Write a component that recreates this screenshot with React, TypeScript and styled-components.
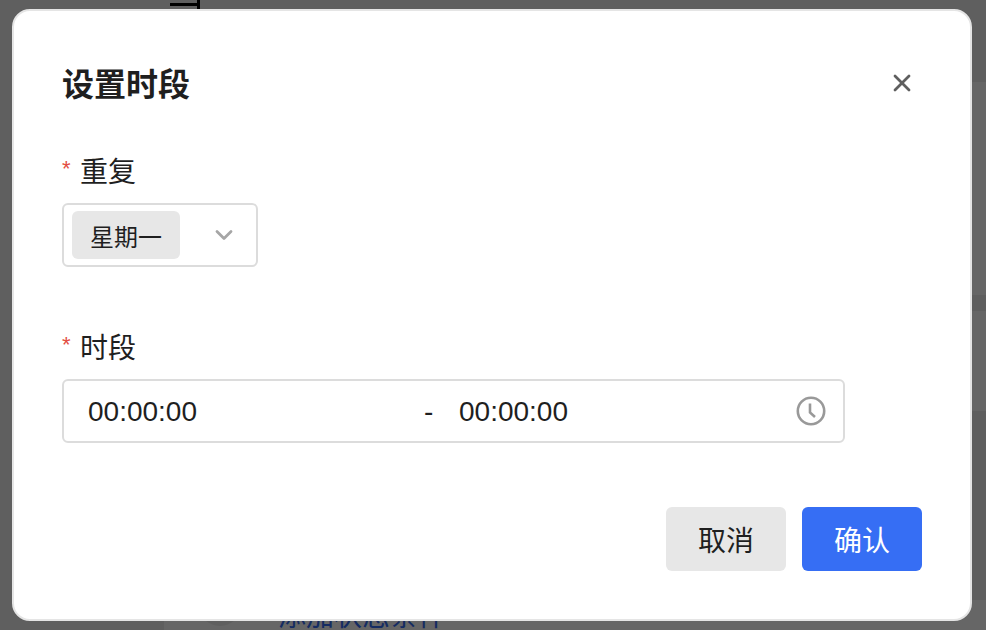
import React from 'react';
import styled, { createGlobalStyle } from 'styled-components';
import { X, ChevronDown, Plus } from 'lucide-react';

const GlobalStyle = createGlobalStyle`
  html, body {
    margin: 0;
    padding: 0;
    height: 100%;
    overflow: hidden;
    background: #eeeeee;
    font-family: "Liberation Sans", "Noto Sans CJK SC", sans-serif;
  }
`;

const Page = styled.div`
  position: relative;
  width: 986px;
  height: 630px;
  overflow: hidden;
  background: #eeeeee;
`;

const PageHeading = styled.div`
  box-sizing: border-box;
  height: 82px;
  padding: 3px 0 0 170px;
`;

const HeadingMark = styled.div`
  position: relative;
  width: 27px;
  height: 3px;
  background: #000000;

  &::after {
    content: '';
    position: absolute;
    top: -3px;
    right: -3px;
    width: 3px;
    height: 16px;
    background: #000000;
  }
`;

const Content = styled.div`
  display: flex;
  flex-direction: column;
  margin-left: 164px;
`;

const Card = styled.div<{ $height: number; $gap?: number }>`
  height: ${props => props.$height}px;
  margin-bottom: ${props => props.$gap || 0}px;
  background: #ffffff;
`;

const AddRow = styled.div`
  display: flex;
  align-items: flex-start;
  height: 40px;
  margin-top: 189px;
  padding-left: 34px;
  background: #ffffff;
  color: #366ef4;
`;

const AddIcon = styled.span`
  display: flex;
  align-items: center;
  justify-content: center;
  flex: none;
  width: 44px;
  height: 26px;
  margin-right: 36px;
  border-radius: 0 0 22px 22px;
  background: #eeeeee;
`;

const AddLabel = styled.span`
  font-size: 28px;
  line-height: 34px;
`;

const Overlay = styled.div`
  position: absolute;
  inset: 0;
  box-sizing: border-box;
  padding: 9px 14px 9px 12px;
  background: rgba(0, 0, 0, 0.6);
`;

const Dialog = styled.div`
  box-sizing: border-box;
  height: 612px;
  padding: 50px 48px 48px 48px;
  display: flex;
  flex-direction: column;
  background: #ffffff;
  border-radius: 18px;
  border: 2px solid #e5e5e5;
`;

const Header = styled.div`
  display: flex;
  align-items: center;
  justify-content: space-between;
  height: 48px;
  margin-bottom: 43px;
`;

const Title = styled.h2`
  margin: 0;
  font-size: 32px;
  line-height: 48px;
  font-weight: 700;
  color: #1f1f1f;
`;

const CloseButton = styled.button`
  display: flex;
  padding: 0;
  margin: -4px 6px 0 0;
  border: none;
  background: none;
  color: #5f5f5f;
`;

const Field = styled.div`
  display: flex;
  flex-direction: column;
  align-items: flex-start;
  margin-bottom: 61px;
`;

const Label = styled.label`
  display: flex;
  align-items: center;
  height: 36px;
  margin-bottom: 15px;
  font-size: 28px;
  color: #1f1f1f;
`;

const Required = styled.span`
  width: 18px;
  margin-top: -2px;
  font-size: 22px;
  color: #e34d43;
`;

const SelectBox = styled.div`
  box-sizing: border-box;
  display: flex;
  align-items: center;
  justify-content: space-between;
  width: 196px;
  height: 64px;
  padding: 0 18px 0 8px;
  border: 2px solid #dcdcdc;
  border-radius: 6px;
  color: #a6a6a6;
`;

const Tag = styled.span`
  display: flex;
  align-items: center;
  justify-content: center;
  width: 108px;
  height: 48px;
  border-radius: 6px;
  background: #e7e7e7;
  font-size: 24px;
  color: #1f1f1f;
`;

const RangeBox = styled.div`
  box-sizing: border-box;
  display: flex;
  align-items: center;
  width: 783px;
  height: 64px;
  padding: 0 16px 0 24px;
  border: 2px solid #dcdcdc;
  border-radius: 6px;
`;

const TimeValue = styled.span`
  flex: 1;
  padding-top: 2px;
  font-size: 28px;
  color: #1f1f1f;
`;

const Separator = styled.span`
  width: 35px;
  padding-top: 2px;
  font-size: 28px;
  color: #1f1f1f;
`;

const ClockIcon = styled.svg`
  flex: none;
  width: 32px;
  height: 32px;
  fill: none;
  stroke: #999999;
  stroke-width: 2.6;
`;

const Footer = styled.div`
  display: flex;
  justify-content: flex-end;
  gap: 16px;
  margin-top: auto;
`;

const ActionButton = styled.button<{ $primary?: boolean }>`
  width: 120px;
  height: 64px;
  border: none;
  border-radius: 6px;
  padding: 0;
  font-family: inherit;
  font-size: 28px;
  background: ${props => (props.$primary ? '#366ef4' : '#e7e7e7')};
  color: ${props => (props.$primary ? '#ffffff' : '#1f1f1f')};
`;

const App = () => {
  return (
    <Page>
      <GlobalStyle />
      <PageHeading>
        <HeadingMark />
      </PageHeading>
      <Content>
        <Card $height={130} />
        <Card $height={83} $gap={16} />
        <Card $height={100} />
        <AddRow>
          <AddIcon>
            <Plus size={20} strokeWidth={2.4} />
          </AddIcon>
          <AddLabel>添加状态条件</AddLabel>
        </AddRow>
      </Content>
      <Overlay>
        <Dialog>
          <Header>
            <Title>设置时段</Title>
            <CloseButton aria-label="关闭">
              <X size={28} strokeWidth={2.4} />
            </CloseButton>
          </Header>
          <Field>
            <Label><Required>*</Required>重复</Label>
            <SelectBox>
              <Tag>星期一</Tag>
              <ChevronDown size={28} strokeWidth={2.4} />
            </SelectBox>
          </Field>
          <Field>
            <Label><Required>*</Required>时段</Label>
            <RangeBox>
              <TimeValue>00:00:00</TimeValue>
              <Separator>-</Separator>
              <TimeValue>00:00:00</TimeValue>
              <ClockIcon viewBox="0 0 32 32">
                <circle cx="16" cy="16" r="13.2" />
                <path d="M15 8.5V17.5L20 22" />
              </ClockIcon>
            </RangeBox>
          </Field>
          <Footer>
            <ActionButton>取消</ActionButton>
            <ActionButton $primary>确认</ActionButton>
          </Footer>
        </Dialog>
      </Overlay>
    </Page>
  );
};

export default App;
